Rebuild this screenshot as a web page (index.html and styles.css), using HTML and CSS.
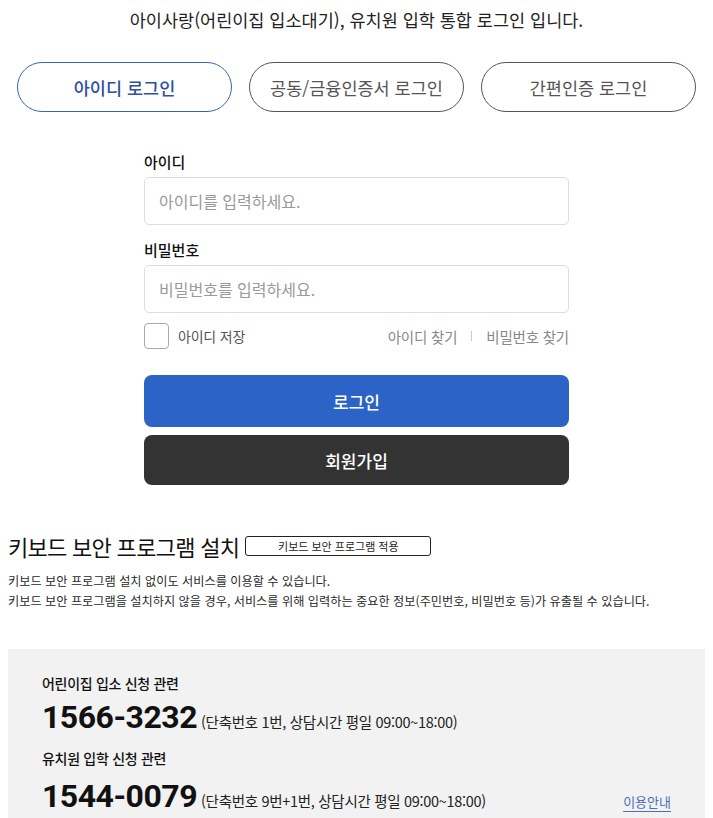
FILE: index.html
```html
<!DOCTYPE html>
<html lang="ko">
<head>
<meta charset="utf-8">
<title>통합 로그인</title>
<link rel="stylesheet" href="styles.css">
</head>
<body>
<div class="page">
  <p class="intro">아이사랑(어린이집 입소대기), 유치원 입학 통합 로그인 입니다.</p>

  <div class="tabs">
    <a class="tab active">아이디 로그인</a>
    <a class="tab">공동/금융인증서 로그인</a>
    <a class="tab">간편인증 로그인</a>
  </div>

  <form class="login">
    <label class="label">아이디</label>
    <div class="field">아이디를 입력하세요.</div>
    <label class="label second">비밀번호</label>
    <div class="field">비밀번호를 입력하세요.</div>

    <div class="opts">
      <div class="save"><span class="check"></span><span>아이디 저장</span></div>
      <div class="finds"><span>아이디 찾기</span><span class="sep"></span><span>비밀번호 찾기</span></div>
    </div>

    <div class="btn primary">로그인</div>
    <div class="btn dark">회원가입</div>
  </form>

  <div class="kb">
    <div class="kb-head"><span class="kb-title">키보드 보안 프로그램 설치</span><span class="kb-btn">키보드 보안 프로그램 적용</span></div>
    <p class="kb-desc">키보드 보안 프로그램 설치 없이도 서비스를 이용할 수 있습니다.<br>키보드 보안 프로그램을 설치하지 않을 경우, 서비스를 위해 입력하는 중요한 정보(주민번호, 비밀번호 등)가 유출될 수 있습니다.</p>
  </div>

  <div class="contact">
    <p class="c-label">어린이집 입소 신청 관련</p>
    <p class="c-line"><span class="num">1566-3232</span><span class="c-note">(단축번호 1번, 상담시간 평일 09:00~18:00)</span></p>
    <p class="c-label second">유치원 입학 신청 관련</p>
    <p class="c-line last"><span class="num">1544-0079</span><span class="c-note">(단축번호 9번+1번, 상담시간 평일 09:00~18:00)</span><a class="guide">이용안내</a></p>
  </div>
</div>
</body>
</html>
```

FILE: styles.css
```css
* { box-sizing: border-box; }
html, body { margin: 0; padding: 0; background: #fff; }
body {
  margin: 8px;
  font-family: "Noto Sans CJK KR", "Noto Sans", sans-serif;
  color: #222;
}
.page { width: 697px; }
p { margin: 0; }

.intro {
  text-align: center;
  font-size: 17.5px;
  line-height: 24px;
  color: #222;
}

.tabs {
  display: flex;
  justify-content: center;
  gap: 17px;
  margin-top: 30px;
}
.tab {
  width: 215px;
  height: 50px;
  border: 1px solid #555;
  border-radius: 25px;
  display: flex;
  align-items: center;
  justify-content: center;
  font-size: 17.5px;
  color: #555;
}
.tab.active {
  border-color: #3d63ad;
  color: #2f509f;
  font-weight: 500;
}

.login {
  width: 425px;
  margin: 40px auto 0;
  display: flex;
  flex-direction: column;
}
.label {
  font-size: 15px;
  line-height: 20px;
  font-weight: 500;
  color: #111;
  margin-bottom: 5px;
}
.label.second { margin-top: 15px; }
.field {
  height: 48px;
  border: 1px solid #ddd;
  border-radius: 5px;
  padding-left: 14px;
  display: flex;
  align-items: center;
  font-size: 16px;
  color: #999;
}
.opts {
  margin-top: 10px;
  height: 26px;
  display: flex;
  justify-content: space-between;
  align-items: center;
  font-size: 14px;
  color: #666;
  letter-spacing: -0.2px;
}
.save { display: flex; align-items: center; gap: 9px; color: #555; }
.check {
  width: 25px;
  height: 26px;
  border: 1px solid #aaa;
  border-radius: 4px;
}
.finds { display: flex; align-items: center; gap: 14px; color: #888; font-size: 14.5px; }
.sep { width: 1px; height: 10px; background: #ccc; }

.btn {
  display: flex;
  align-items: center;
  justify-content: center;
  color: #fff;
  font-size: 17px;
  font-weight: 500;
  border-radius: 8px;
}
.btn.primary { margin-top: 26px; height: 52px; background: #2c63c6; }
.btn.dark { margin-top: 8px; height: 50px; background: #333; }

.kb { margin-top: 46px; }
.kb-head { display: flex; align-items: center; gap: 6px; height: 30px; }
.kb-title { font-size: 22px; color: #111; letter-spacing: -0.7px; }
.kb-btn {
  width: 186px;
  height: 20px;
  border: 1px solid #222;
  border-radius: 3px;
  display: flex;
  align-items: center;
  justify-content: center;
  font-size: 11px;
  color: #222;
}
.kb-desc {
  margin-top: 10px;
  font-size: 12.2px;
  line-height: 20px;
  color: #2a2a2a;
}

.contact {
  margin-top: 38px;
  background: #f2f2f2;
  padding: 24px 34px 4px 34px;
}
.c-label {
  font-size: 14px;
  line-height: 20px;
  font-weight: 500;
  color: #111;
  letter-spacing: -0.3px;
}
.c-label.second { margin-top: 11px; }
.c-line {
  margin-top: 4px;
  display: flex;
  align-items: baseline;
  height: 40px;
}
.c-line.last { margin-top: 8px; }
.num {
  font-family: Roboto, "Liberation Sans", sans-serif;
  font-weight: 700;
  font-size: 32px;
  line-height: 40px;
  letter-spacing: -0.5px;
  color: #111;
}
.c-note {
  margin-left: 4px;
  font-size: 14.5px;
  color: #222;
  letter-spacing: -0.3px;
}
.guide {
  margin-left: auto;
  font-size: 13px;
  color: #4a6fb5;
  text-decoration: underline;
  text-underline-offset: 4px;
}
```
